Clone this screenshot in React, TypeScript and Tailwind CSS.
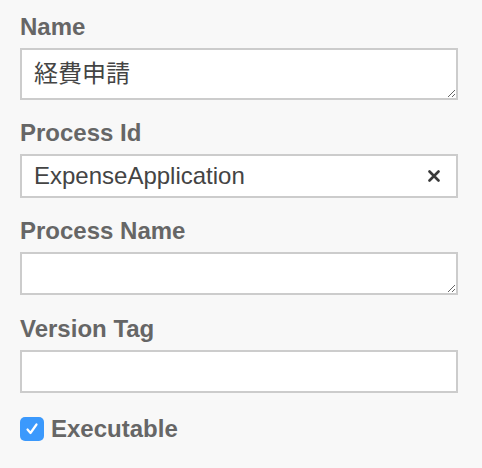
import { useState } from 'react'

const font = { fontFamily: '"Liberation Sans", "Noto Sans CJK JP", Arial, sans-serif' }

function Label({ children }: { children: React.ReactNode }) {
  return <div className="text-[24px] leading-[26px] font-bold text-[#666] mb-[8px]">{children}</div>
}

export default function App() {
  const [name, setName] = useState('経費申請')
  const [processId, setProcessId] = useState('ExpenseApplication')
  const [processName, setProcessName] = useState('')
  const [versionTag, setVersionTag] = useState('')
  const [executable, setExecutable] = useState(true)

  return (
    <div className="min-h-[468px] w-[482px] bg-[#f8f8f8] px-[20px] pt-[14px]" style={font}>
      {/* Name */}
      <div>
        <Label>Name</Label>
        <textarea
          value={name}
          onChange={(e) => setName(e.target.value)}
          className="block w-[438px] h-[52px] border-2 border-[#ccc] bg-white px-[12px] pt-[11px] text-[24px] leading-[26px] text-[#444] outline-none"
          style={font}
        />
      </div>

      {/* Process Id */}
      <div className="mt-[20px]">
        <Label>Process Id</Label>
        <div className="flex items-center w-[438px] h-[44px] border-2 border-[#ccc] bg-white pl-[12px] pr-[16px]">
          <input
            value={processId}
            onChange={(e) => setProcessId(e.target.value)}
            className="flex-1 min-w-0 bg-transparent text-[24px] text-[#444] outline-none"
            style={font}
          />
          <button type="button" onClick={() => setProcessId('')} className="shrink-0 w-[12px] h-[12px]">
            <svg width="12" height="12" viewBox="0 0 12 12">
              <path d="M1.5 1.5 L10.5 10.5 M10.5 1.5 L1.5 10.5" stroke="#3a3a3a" strokeWidth="2.6" strokeLinecap="round" />
            </svg>
          </button>
        </div>
      </div>

      {/* Process Name */}
      <div className="mt-[20px]">
        <Label>Process Name</Label>
        <textarea
          value={processName}
          onChange={(e) => setProcessName(e.target.value)}
          className="block w-[438px] h-[43px] border-2 border-[#ccc] bg-white px-[12px] pt-[6px] text-[24px] leading-[26px] text-[#444] outline-none"
          style={font}
        />
      </div>

      {/* Version Tag */}
      <div className="mt-[21px]">
        <Label>Version Tag</Label>
        <input
          value={versionTag}
          onChange={(e) => setVersionTag(e.target.value)}
          className="block w-[438px] h-[43px] border-2 border-[#ccc] bg-white px-[12px] text-[24px] text-[#444] outline-none"
          style={font}
        />
      </div>

      {/* Executable */}
      <label className="mt-[23px] flex items-center gap-[7px] cursor-pointer select-none">
        <span
          onClick={() => setExecutable(!executable)}
          className={`flex items-center justify-center w-[24px] h-[24px] rounded-[5px] ${executable ? 'bg-[#3b99fc]' : 'bg-white border border-[#aaa]'}`}
        >
          {executable && (
            <svg width="16" height="16" viewBox="0 0 16 16">
              <path d="M3.5 8.5 L6.5 12 L12.5 3.5" fill="none" stroke="white" strokeWidth="2.2" strokeLinecap="round" strokeLinejoin="round" />
            </svg>
          )}
        </span>
        <span className="text-[24px] leading-[26px] font-bold text-[#666]">Executable</span>
      </label>
    </div>
  )
}
